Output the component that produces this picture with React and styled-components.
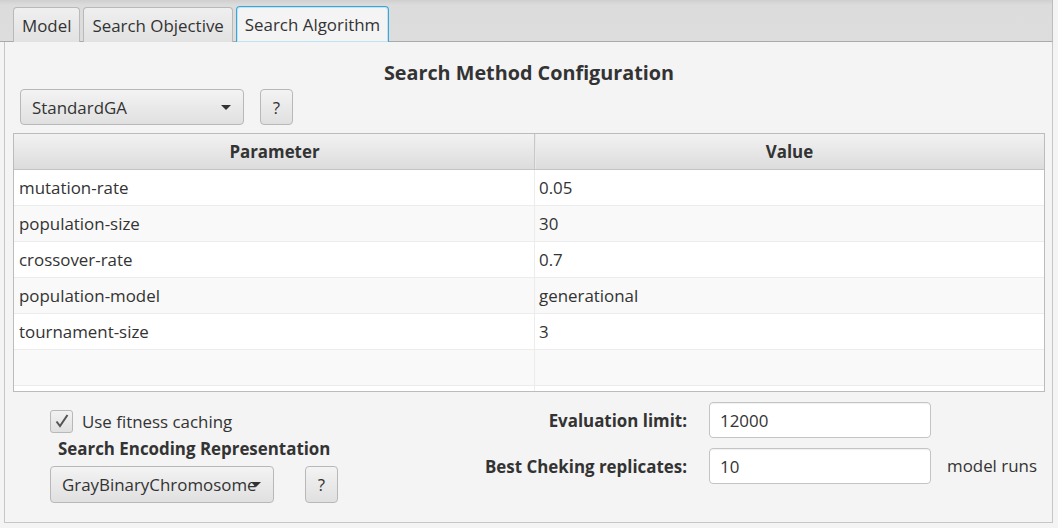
import React from "react";
import styled, { createGlobalStyle } from "styled-components";

const FS = 16.9;

const Global = createGlobalStyle`
  html, body { margin: 0; padding: 0; background: #f4f4f4; }
  body { font-family: "Open Sans", "Noto Sans", sans-serif; font-size: ${FS}px; color: #333; }
  * { box-sizing: border-box; }
`;

const Page = styled.div`
  width: 1058px;
  height: 528px;
  background: #f4f4f4;
  overflow: hidden;
`;

const TabPane = styled.div`
  width: 1053px;
  display: flex;
  flex-direction: column;
`;

const TabHeader = styled.div`
  height: 42px;
  background: linear-gradient(#cfcfcf 0px, #dcdcdc 5px, #dddddd 100%);
  border-bottom: 1px solid #a9a9a9;
  border-right: 1px solid #bdbdbd;
  display: flex;
  align-items: flex-end;
  padding-left: 13px;
  gap: 3px;
`;

const Tab = styled.div`
  height: 35px;
  padding: 0 8px;
  display: flex;
  align-items: center;
  font-size: ${FS}px;
  color: #333;
  border-radius: 4px 4px 0 0;
  margin-bottom: -1px;
  ${(p) =>
    p.$active
      ? `
    background: #f4f4f4;
    border: 1px solid #3aa6d8;
    border-bottom: none;
    box-shadow: inset 0 0 0 1px #bfe3f3;
    height: 36px;
  `
      : `
    background: linear-gradient(#efefef, #e2e2e2);
    border: 1px solid #b9b9b9;
    border-bottom: none;
  `}
`;

const Body = styled.div`
  margin-left: 4px;
  height: 481px;
  border: 1px solid #c6c6c6;
  border-top: none;
  background: #f4f4f4;
  padding: 0 7px 0 8px;
  display: flex;
  flex-direction: column;
`;

const Title = styled.div`
  margin-top: 15px;
  height: 32px;
  line-height: 32px;
  text-align: center;
  font-weight: 700;
  font-size: 19.8px;
  color: #333;
`;

const ControlRow = styled.div`
  display: flex;
  align-items: center;
  gap: ${(p) => p.$gap}px;
  margin-left: ${(p) => p.$indent || 0}px;
  margin-top: ${(p) => p.$top || 0}px;
`;

const Combo = styled.div`
  width: 224px;
  height: ${(p) => p.$h || 36}px;
  border: 1px solid #b8b8b8;
  border-radius: 4px;
  background: linear-gradient(#f3f3f3, #e0e0e0);
  display: flex;
  align-items: center;
  padding: 0 12px 0 11px;
  font-size: ${FS}px;
  color: #333;
`;

const ComboLabel = styled.span`
  flex: 1;
  min-width: 0;
  white-space: nowrap;
  overflow: hidden;
`;

const Arrow = styled.span`
  flex: none;
  width: 0;
  height: 0;
  border-left: 5px solid transparent;
  border-right: 5px solid transparent;
  border-top: 5px solid #333;
  margin-left: ${(p) => p.$ml || 4}px;
`;

const HelpButton = styled.div`
  width: 33px;
  height: ${(p) => p.$h || 36}px;
  border: 1px solid #b8b8b8;
  border-radius: 4px;
  background: linear-gradient(#f3f3f3, #e0e0e0);
  display: flex;
  align-items: center;
  justify-content: center;
  font-size: ${FS}px;
  color: #333;
`;

const Table = styled.div`
  margin-top: 8px;
  height: 259px;
  border: 1px solid #bcbcbc;
  background: #fff;
  overflow: hidden;
`;

const Row = styled.div`
  display: grid;
  grid-template-columns: 521px 1fr;
  height: 36px;
  background: ${(p) => (p.$odd ? "#f9f9f9" : "#ffffff")};
  border-bottom: 1px solid #ececec;
`;

const HeaderRow = styled(Row)`
  background: linear-gradient(#f2f2f2, #dcdcdc);
  border-bottom: 1px solid #c4c4c4;
`;

const HeadCell = styled.div`
  display: flex;
  align-items: center;
  justify-content: center;
  font-weight: 700;
  font-size: ${FS}px;
  color: #333;
  border-right: 1px solid ${(p) => (p.$last ? "transparent" : "#c8c8c8")};
  border-left: 1px solid ${(p) => (p.$last ? "#e8e8e8" : "transparent")};
`;

const Cell = styled.div`
  display: flex;
  align-items: center;
  padding-left: ${(p) => (p.$last ? 4 : 5)}px;
  font-size: ${FS}px;
  color: #333;
  border-right: 1px solid ${(p) => (p.$last ? "transparent" : "#ececec")};
`;

const Bottom = styled.div`
  margin-top: 10px;
  display: flex;
  align-items: flex-start;
`;

const LeftCol = styled.div`
  width: 350px;
  margin-left: 37px;
  padding-top: 7px;
  display: flex;
  flex-direction: column;
`;

const CheckRow = styled.label`
  display: flex;
  align-items: center;
  gap: 9px;
  height: 24px;
  font-size: ${FS}px;
  color: #333;
`;

const CheckBox = styled.span`
  width: 23px;
  height: 23px;
  border: 1px solid #b8b8b8;
  border-radius: 3px;
  background: linear-gradient(#f2f2f2, #e0e0e0);
  display: flex;
  align-items: center;
  justify-content: center;
`;

const SectionLabel = styled.div`
  margin-top: 4px;
  margin-left: 8px;
  height: 24px;
  line-height: 24px;
  font-weight: 700;
  font-size: ${FS}px;
  color: #333;
  white-space: nowrap;
`;

const FieldGrid = styled.div`
  display: grid;
  grid-template-columns: 309px 222px auto;
  row-gap: 10px;
  align-items: center;
`;

const FieldLabel = styled.div`
  text-align: right;
  padding-right: 22px;
  font-weight: 700;
  font-size: ${FS}px;
  color: #333;
  white-space: nowrap;
`;

const TextField = styled.div`
  height: 36px;
  border: 1px solid #c4c4c4;
  border-radius: 4px;
  background: #fff;
  box-shadow: inset 0 1px 1px rgba(0, 0, 0, 0.06);
  display: flex;
  align-items: center;
  padding-left: 10px;
  font-size: ${FS}px;
  color: #333;
`;

const Suffix = styled.div`
  padding-left: 16px;
  font-size: ${FS}px;
  color: #333;
  margin-top: -2px;
  white-space: nowrap;
`;

const params = [
  ["mutation-rate", "0.05"],
  ["population-size", "30"],
  ["crossover-rate", "0.7"],
  ["population-model", "generational"],
  ["tournament-size", "3"],
  ["", ""],
  ["", ""],
];

export default function App() {
  return (
    <Page>
      <Global />
      <TabPane>
        <TabHeader>
          <Tab>Model</Tab>
          <Tab>Search Objective</Tab>
          <Tab $active>Search Algorithm</Tab>
        </TabHeader>
        <Body>
          <Title>Search Method Configuration</Title>
          <ControlRow $gap={16} $indent={7}>
            <Combo>
              <ComboLabel>StandardGA</ComboLabel>
              <Arrow />
            </Combo>
            <HelpButton>?</HelpButton>
          </ControlRow>
          <Table>
            <HeaderRow>
              <HeadCell>Parameter</HeadCell>
              <HeadCell $last>Value</HeadCell>
            </HeaderRow>
            {params.map(([k, v], i) => (
              <Row key={i} $odd={i % 2 === 1}>
                <Cell>{k}</Cell>
                <Cell $last>{v}</Cell>
              </Row>
            ))}
          </Table>
          <Bottom>
            <LeftCol>
              <CheckRow>
                <CheckBox>
                  <svg width="16" height="16" viewBox="0 0 16 16">
                    <path d="M2.5 8.5 L6 13 L13.5 2" fill="none" stroke="#555" strokeWidth="2" />
                  </svg>
                </CheckBox>
                Use fitness caching
              </CheckRow>
              <SectionLabel>Search Encoding Representation</SectionLabel>
              <ControlRow $gap={31} $top={5}>
                <Combo $h={37}>
                  <ComboLabel>GrayBinaryChromosome</ComboLabel>
                  <Arrow $ml={-6} />
                </Combo>
                <HelpButton $h={37}>?</HelpButton>
              </ControlRow>
            </LeftCol>
            <FieldGrid>
              <FieldLabel>Evaluation limit:</FieldLabel>
              <TextField>12000</TextField>
              <span />
              <FieldLabel>Best Cheking replicates:</FieldLabel>
              <TextField>10</TextField>
              <Suffix>model runs</Suffix>
            </FieldGrid>
          </Bottom>
        </Body>
      </TabPane>
    </Page>
  );
}
